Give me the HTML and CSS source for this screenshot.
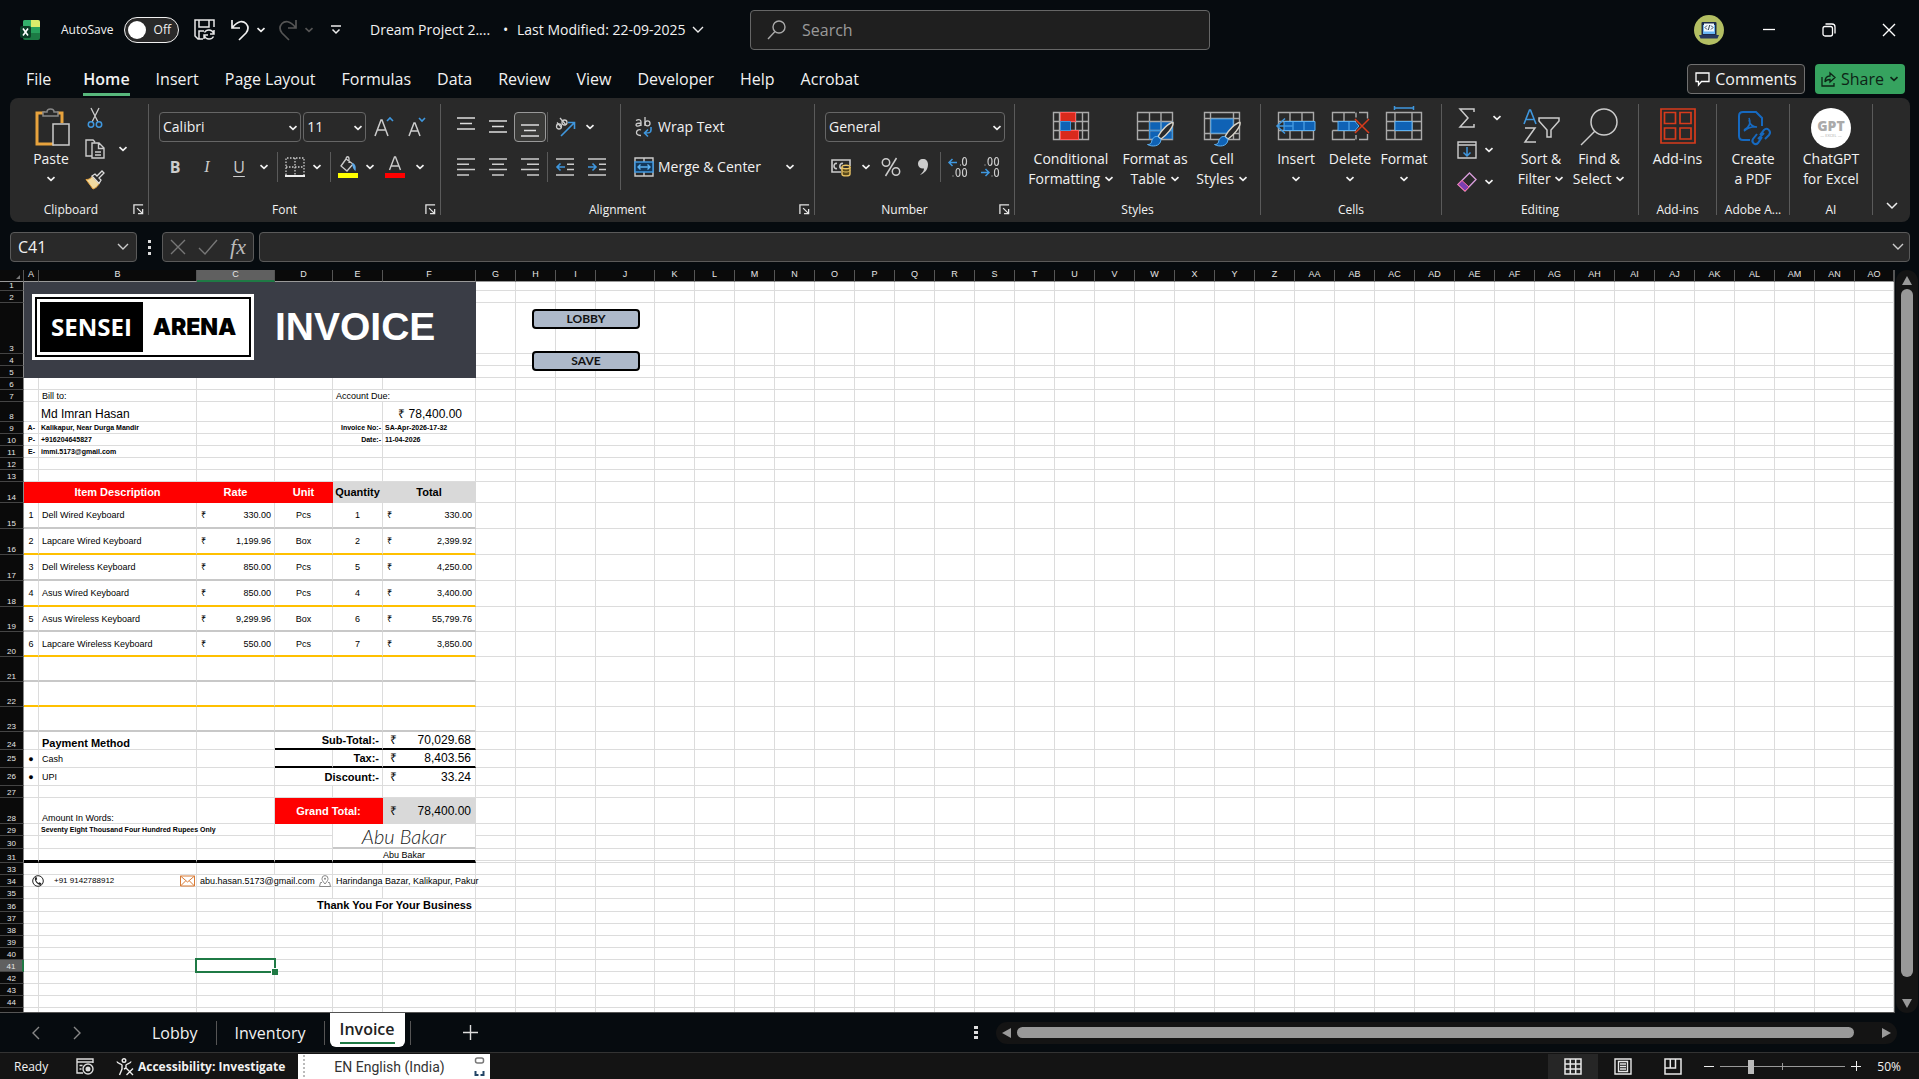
FILE: index.html
```html
<!DOCTYPE html>
<html lang="en">
<head>
<meta charset="utf-8">
<title>Dream Project 2 - Excel</title>
<link rel="stylesheet" href="styles.css">
</head>
<body>
<svg class="defs" aria-hidden="true">
  <symbol id="chev" viewBox="0 0 10 6"><path d="M1.5 1.2 5 4.4 8.500 1.200" fill="none" stroke="currentColor" stroke-width="1.700"/></symbol>
  <symbol id="launch" viewBox="0 0 12 12"><path d="M1 11V1h10M4.500 4.500l5.500 5.500M10.500 5.500v5h-5" fill="none" stroke="#e4e4e4" stroke-width="1.400"/></symbol>
  <symbol id="brush" viewBox="0 0 28 26"><path d="M26.500 1.500c-4 0-12 8-15 14l3 2.500c5-3.500 13-12 12-16.500z" fill="#292929" stroke="#d8d4ca" stroke-width="1.500"/><path d="M11 15.500c-4-.5-5.500 3-6 5.500-.5 2-2 2.500-4 2.500 4 2.500 13 2.500 13.500-5z" fill="#0f62b5" stroke="#5db0f0"/></symbol>
</svg>

<header class="titlebar">
  <div class="title-left">
    <svg class="app-icon" viewBox="0 0 20 20"><rect x="3" width="17" height="20" rx="2" fill="#1c7a44"/><path d="M5 0h7v7H3V2a2 2 0 0 1 2-2z" fill="#33b16b"/><path d="M11 0h7a2 2 0 0 1 2 2v5h-9z" fill="#d9ec6b"/><path d="M11 7h9v6h-9z" fill="#27a05c"/><rect y="6" width="11" height="12" rx="2" fill="#0b3d26"/><path d="M3 8.500l5 7M8 8.500l-5 7" stroke="#fff" stroke-width="1.600"/></svg>
    <label class="autosave" for="autosave">AutoSave</label>
    <span class="switch"><input type="checkbox" id="autosave"><span>Off</span></span>
    <button class="tb save" aria-label="Save"><svg width="22" height="22" viewBox="0 0 22 22" fill="none" stroke="#e8e8e8" stroke-width="1.500"><path d="M9 20H4l-3-3V1h19v7M5 1v7h10V1M5 20v-8h5"/><path d="M20 11v4h-4M10 20v-4h4M19.500 14a5 5 0 0 0-9-.5M10.500 17a5 5 0 0 0 9 .5"/></svg></button>
    <button class="tb undo" aria-label="Undo"><svg width="20" height="22" viewBox="0 0 20 22" fill="none" stroke="#f0f0f0" stroke-width="1.700"><path d="M2 1v8h8M2.500 8.500C8 1.500 13 1.500 16 4.500c3 3.300 2 7 0 9.500l-7 7"/></svg></button>
    <button class="tb caret" aria-label="Undo list"><svg class="chev"><use href="#chev"/></svg></button>
    <button class="tb undo dim" aria-label="Redo"><svg width="20" height="22" viewBox="0 0 20 22" fill="none" stroke="#555" stroke-width="1.700"><path d="M18 1v8h-8M17.500 8.500C12 1.500 7 1.500 4 4.500c-3 3.300-2 7 0 9.500l7 7"/></svg></button>
    <button class="tb caret dim" aria-label="Redo list"><svg class="chev"><use href="#chev"/></svg></button>
    <button class="tb custom" aria-label="Customize toolbar"><svg width="10" height="10" viewBox="0 0 10 10" fill="none" stroke="#eee" stroke-width="1.500"><path d="M0 1h10M1.500 4.500 5 8l3.500-3.500"/></svg></button>
    <span class="doc">Dream Project 2....</span><span class="dot">•</span>
    <button class="modified">Last Modified: 22-09-2025 <svg width="12" height="8" viewBox="0 0 12 8"><path d="M1 1l5 5 5-5" fill="none" stroke="#eee" stroke-width="1.400"/></svg></button>
  </div>
  <div class="search">
    <svg width="20" height="20" viewBox="0 0 20 20" fill="none" stroke="#aaa" stroke-width="1.400"><circle cx="12" cy="7" r="6"/><path d="M8 11.500 1 19"/></svg>
    <input type="text" placeholder="Search" aria-label="Search">
  </div>
  <div class="window">
    <svg class="avatar" viewBox="0 0 30 30"><circle cx="15" cy="15" r="15" fill="#b3bf63"/><rect x="7.500" y="7" width="15" height="14" rx="1" fill="#1d2b4a"/><rect x="9" y="10" width="12" height="9" fill="#69b7f5"/><rect x="10" y="8.500" width="10" height="8" fill="#eef6fb"/><path d="M13 10.500l-2 2 2 2M17 10.500l2 2-2 2M15.700 10l-1.400 5" fill="none" stroke="#345"/><path d="M5 20h20l-1.500 3.500h-17z" fill="#26385e"/></svg>
    <button class="wb" aria-label="Minimize"><svg width="14" height="14" viewBox="0 0 14 14"><path d="M1 6.500h12" stroke="#fff" stroke-width="1.300"/></svg></button>
    <button class="wb" aria-label="Restore"><svg width="14" height="14" viewBox="0 0 14 14" fill="none" stroke="#fff" stroke-width="1.300"><rect x="1" y="3.500" width="9.500" height="9.500" rx="2"/><path d="M3.500 1h6.500a3 3 0 0 1 3 3v6.500"/></svg></button>
    <button class="wb" aria-label="Close"><svg width="14" height="14" viewBox="0 0 14 14"><path d="M1 1l12 12M13 1 1 13" stroke="#fff" stroke-width="1.400"/></svg></button>
  </div>
</header>

<nav class="tabs">
  <button class="file">File</button><button class="on">Home</button><button>Insert</button><button>Page Layout</button><button>Formulas</button><button>Data</button><button>Review</button><button>View</button><button>Developer</button><button>Help</button><button>Acrobat</button>
  <div class="tab-actions">
    <button class="comments"><svg width="15" height="14" viewBox="0 0 15 14"><path d="M1 1h13v8.500H6.500L3.500 13V9.500H1z" fill="none" stroke="#fff" stroke-width="1.300"/></svg>Comments</button>
    <button class="share"><svg width="15" height="15" viewBox="0 0 15 15" fill="none" stroke="#0d2416" stroke-width="1.300"><path d="M1 5v9h12v-3"/><path d="M4 10c0-4 2-6 5-6V1l5 4.500L9 10V7.500c-2.500 0-4 .5-5 2.500z"/></svg>Share<svg class="chev"><use href="#chev"/></svg></button>
  </div>
</nav>

<section class="ribbon">
  <div class="group g-clip">
    <div class="tools">
      <button class="big paste"><svg viewBox="0 0 40 40"><path d="M14 5H6v31h17" fill="none" stroke="#e8a33d" stroke-width="3"/><path d="M26 5h5v10" fill="none" stroke="#e8a33d" stroke-width="3"/><path d="M12 8V4h4c0-4 7-4 7 0h4v4z" fill="#292929" stroke="#888" stroke-width="1.500"/><rect x="22" y="16" width="16" height="21" fill="#292929" stroke="#ccc" stroke-width="1.500"/></svg><span>Paste<br><svg class="chev"><use href="#chev"/></svg></span></button>
      <div class="small-col">
        <div><button aria-label="Cut"><svg width="20" height="20" viewBox="0 0 20 20" fill="none"><path d="M6 0l7 14M14 0 7 14" stroke="#ccc" stroke-width="1.300"/><circle cx="6" cy="16.500" r="2.700" stroke="#3f97de" stroke-width="1.500"/><circle cx="14" cy="16.500" r="2.700" stroke="#3f97de" stroke-width="1.500"/></svg></button></div>
        <div><button aria-label="Copy"><svg width="20" height="20" viewBox="0 0 20 20" fill="none" stroke="#ccc" stroke-width="1.400"><path d="M7 17H1V1h7l2 2M7 4h7l5 5v10H7zM13.500 4v5.500H19M10 13h6M10 16h6"/></svg></button><button class="caret" aria-label="Copy options"><svg class="chev"><use href="#chev"/></svg></button></div>
        <div><button aria-label="Format Painter"><svg width="20" height="20" viewBox="0 0 20 20"><path d="M1 9.500c4 0 5-2 6-3l7 7c-1 2-2 4-6 5.500z" fill="#f0d9a0" stroke="#e8a33d"/><path d="M7 6l3-2 2 2 5-5 2 2-5 5 2 2-2 3.500z" fill="#292929" stroke="#ddd" stroke-width="1.300"/></svg></button></div>
      </div>
    </div>
    <div class="label launch"><span>Clipboard</span><button aria-label="Clipboard settings"><svg><use href="#launch"/></svg></button></div>
  </div>

  <div class="group g-font">
    <div class="tools rows">
      <div class="row">
        <span class="select w-font"><select aria-label="Font"><option>Calibri</option></select><svg class="chev"><use href="#chev"/></svg></span>
        <span class="select w-size"><select aria-label="Font size"><option>11</option></select><svg class="chev"><use href="#chev"/></svg></span>
        <button class="ib" aria-label="Increase font size"><svg width="20" height="22" viewBox="0 0 20 22" fill="none"><path d="M1 20 7 4h1l6 16M3 14h9" stroke="#ccc" stroke-width="1.500"/><path d="M13 5l3-3 3 3" stroke="#3f97de" stroke-width="1.600"/></svg></button>
        <button class="ib" aria-label="Decrease font size"><svg width="20" height="22" viewBox="0 0 20 22" fill="none"><path d="M3 20 8 7h1l5 13M5 15h7" stroke="#ccc" stroke-width="1.500"/><path d="M13 2l3 3 3-3" stroke="#3f97de" stroke-width="1.600"/></svg></button>
      </div>
      <div class="row">
        <button class="ib txt b">B</button><button class="ib txt i">I</button><button class="ib txt u">U</button><button class="caret" aria-label="Underline style"><svg class="chev"><use href="#chev"/></svg></button>
        <i class="vr"></i>
        <button class="ib n" aria-label="Borders"><svg width="20" height="20" viewBox="0 0 20 20" fill="none"><path d="M1 18V1h18v17M10 1v17M1 10h18" stroke="#ccc" stroke-width="1.300" stroke-dasharray="1.500 1.500"/><path d="M0 19h20" stroke="#eee" stroke-width="2"/></svg></button><button class="caret" aria-label="Border style"><svg class="chev"><use href="#chev"/></svg></button>
        <i class="vr"></i>
        <button class="ib n" aria-label="Fill color"><svg width="20" height="22" viewBox="0 0 20 22"><path d="M8 3 3 10l6 5 6-7zM8 3c0-3 3-3 3 0v4" fill="none" stroke="#ccc" stroke-width="1.300"/><path d="M14 7c4 1 4 4 3.500 8-1.500-1-3-3-3.500-8z" fill="#5aa7e6"/><path d="M0 17h20v5H0z" fill="#ff0"/></svg></button><button class="caret" aria-label="Fill colors"><svg class="chev"><use href="#chev"/></svg></button>
        <button class="ib" aria-label="Font color"><svg width="20" height="22" viewBox="0 0 20 22"><path d="M4.500 14 9.500 1h1l5 13M6.500 10h7" fill="none" stroke="#ccc" stroke-width="1.400"/><path d="M0 17h20v5H0z" fill="#f00"/></svg></button><button class="caret" aria-label="Font colors"><svg class="chev"><use href="#chev"/></svg></button>
      </div>
    </div>
    <div class="label launch"><span>Font</span><button aria-label="Font settings"><svg><use href="#launch"/></svg></button></div>
  </div>

  <div class="group g-align">
    <div class="tools">
      <div class="rows split">
        <div class="row">
          <button class="ib" aria-label="Top align"><svg width="18" height="20" viewBox="0 0 18 20" stroke="#ddd" stroke-width="1.500"><path d="M0 1h18M3 6.500h12M0 12h18"/></svg></button>
          <button class="ib" aria-label="Middle align"><svg width="18" height="20" viewBox="0 0 18 20" stroke="#ddd" stroke-width="1.500"><path d="M0 4h18M3 9.500h12M0 15h18"/></svg></button>
          <button class="ib sel" aria-label="Bottom align"><svg width="18" height="20" viewBox="0 0 18 20" stroke="#ddd" stroke-width="1.500"><path d="M0 8h18M3 13.500h12M0 19h18"/></svg></button>
          <i class="vr tight"></i>
          <button class="ib" aria-label="Orientation"><svg width="22" height="20" viewBox="0 0 22 20" fill="none"><g stroke="#ccc" stroke-width="1.300"><circle cx="5" cy="9.500" r="2.500"/><path d="M3 5.500l4.500 5M6 1l6 7"/><circle cx="10.500" cy="5.500" r="2.500"/></g><path d="M7 19 20 6M14 5.500h6.500V12" stroke="#3f97de" stroke-width="1.600"/></svg></button><button class="caret" aria-label="Orientation options"><svg class="chev"><use href="#chev"/></svg></button>
        </div>
        <div class="row">
          <button class="ib" aria-label="Align left"><svg width="18" height="18" viewBox="0 0 18 18" stroke="#ccc" stroke-width="1.500"><path d="M0 1h18M0 6.300h12M0 11.600h18M0 17h12"/></svg></button>
          <button class="ib" aria-label="Center"><svg width="18" height="18" viewBox="0 0 18 18" stroke="#ccc" stroke-width="1.500"><path d="M0 1h18M3 6.300h12M0 11.600h18M3 17h12"/></svg></button>
          <button class="ib" aria-label="Align right"><svg width="18" height="18" viewBox="0 0 18 18" stroke="#ccc" stroke-width="1.500"><path d="M0 1h18M6 6.300h12M0 11.600h18M6 17h12"/></svg></button>
          <i class="vr tight"></i>
          <button class="ib" aria-label="Decrease indent"><svg width="18" height="18" viewBox="0 0 18 18" fill="none"><path d="M0 1h18M11 6.300h7M11 11.600h7M0 17h18" stroke="#ccc" stroke-width="1.500"/><path d="M9 9H1M4.500 5.500 1 9l3.500 3.500" stroke="#3f97de" stroke-width="1.600"/></svg></button>
          <button class="ib" aria-label="Increase indent"><svg width="18" height="18" viewBox="0 0 18 18" fill="none"><path d="M0 1h18M11 6.300h7M11 11.600h7M0 17h18" stroke="#ccc" stroke-width="1.500"/><path d="M0 9h8M4.500 5.500 8 9l-3.500 3.500" stroke="#3f97de" stroke-width="1.600"/></svg></button>
        </div>
      </div>
      <div class="rows wrapcol">
        <div class="row"><button class="wide"><svg width="20" height="20" viewBox="0 0 20 20" fill="none"><g stroke="#ccc" stroke-width="1.300"><path d="M2 3.500c4-2 5 0 5 1.500v4M7 6c-3 0-5 .5-5 2s3.500 1.500 5-.5M11 0v9"/><circle cx="13.500" cy="6.300" r="2.500"/><path d="M7 13c-5-2-7 6 0 5.500"/></g><path d="M17 10v3c0 3-2 3-6 3M14 12.500 10.500 16l3.500 3.500" stroke="#3f97de" stroke-width="1.600"/></svg>Wrap Text</button></div>
        <div class="row"><button class="wide"><svg width="20" height="20" viewBox="0 0 20 20" fill="none"><path d="M1 1h18v18H1zM10 1v4M10 15v4" stroke="#ccc" stroke-width="1.400"/><path d="M1 5h18v10H1z" fill="#14385a" stroke="#3f97de" stroke-width="1.500"/><path d="M4 10h12M6.500 7.500 4 10l2.500 2.500M13.500 7.500 16 10l-2.500 2.500" stroke="#5ab0f0" stroke-width="1.400"/></svg>Merge &amp; Center</button><button class="caret last" aria-label="Merge options"><svg class="chev"><use href="#chev"/></svg></button></div>
      </div>
    </div>
    <div class="label launch"><span>Alignment</span><button aria-label="Alignment settings"><svg><use href="#launch"/></svg></button></div>
  </div>

  <div class="group g-number">
    <div class="tools rows">
      <div class="row"><span class="select w-num"><select aria-label="Number format"><option>General</option></select><svg class="chev"><use href="#chev"/></svg></span></div>
      <div class="row">
        <button class="ib" aria-label="Accounting format"><svg width="20" height="20" viewBox="0 0 20 20" fill="none"><path d="M10 15H1V3h18v6M6 6.500c-4-1-4 6 0 5M12 6.500c-4-1-4 6-1 5" stroke="#ccc" stroke-width="1.600"/><path d="M11 10v7c0 2.500 8 2.500 8 0v-7" fill="#5a4a1a" stroke="#ecc565" stroke-width="1.400"/><ellipse cx="15" cy="10" rx="4" ry="1.800" fill="#292929" stroke="#ecc565" stroke-width="1.400"/><path d="M11 13.500c1 2 7 2 8 0" stroke="#ecc565"/></svg></button><button class="caret" aria-label="Currencies"><svg class="chev"><use href="#chev"/></svg></button>
        <button class="ib" aria-label="Percent"><svg width="20" height="20" viewBox="0 0 20 20" fill="none" stroke="#ccc" stroke-width="1.500"><circle cx="5" cy="5.500" r="3.700"/><circle cx="15" cy="14.500" r="3.700"/><path d="M15.500 1 4.500 19"/></svg></button>
        <button class="ib" aria-label="Comma"><svg width="12" height="18" viewBox="0 0 12 18"><path d="M6 1c3 0 5 2 5 5.500 0 5-3 8.500-8 10.500 3-3 4-4.500 4-6.500-3.500.5-6-1.500-6-4.500S3 1 6 1z" fill="#ccc"/></svg></button>
        <i class="vr tight"></i>
        <button class="ib" aria-label="Increase decimal"><svg width="20" height="20" viewBox="0 0 20 20" fill="none"><path d="M9 5.500H1M4.500 2 1 5.500 4.500 9" stroke="#3f97de" stroke-width="1.500"/><g stroke="#ccc" stroke-width="1.200"><ellipse cx="16.500" cy="4.500" rx="2" ry="4"/><ellipse cx="10" cy="15.500" rx="2" ry="4"/><ellipse cx="16.500" cy="15.500" rx="2" ry="4"/><path d="M12 8h1M4.500 19h1"/></g></svg></button>
        <button class="ib" aria-label="Decrease decimal"><svg width="20" height="20" viewBox="0 0 20 20" fill="none"><path d="M1 15.500h8M5.500 12 9 15.500 5.500 19" stroke="#3f97de" stroke-width="1.500"/><g stroke="#ccc" stroke-width="1.200"><ellipse cx="16.500" cy="15.500" rx="2" ry="4"/><ellipse cx="10" cy="4.500" rx="2" ry="4"/><ellipse cx="16.500" cy="4.500" rx="2" ry="4"/><path d="M4.500 8h1M11.500 19h1"/></g></svg></button>
      </div>
    </div>
    <div class="label launch"><span>Number</span><button aria-label="Number settings"><svg><use href="#launch"/></svg></button></div>
  </div>

  <div class="group g-styles">
    <div class="tools">
      <button class="big w90"><svg viewBox="0 0 40 40"><path d="M2.500 4.500h35v27h-35zM2.500 13.500h35M2.500 22.500h35M8.500 4.500v27M24.500 4.500v27M31.500 4.500v27" fill="none" stroke="#aaa" stroke-width="1.400"/><path d="M9.500 4.500h15v9h-15zM9.500 22.500h18v9h-18z" fill="#d92a1c" stroke="#ff5a5a"/><path d="M9.500 13.500h10v9h-10z" fill="#0f62b5" stroke="#3f97de"/></svg><span>Conditional<br>Formatting <svg class="chev"><use href="#chev"/></svg></span></button>
      <button class="big w78"><svg viewBox="0 0 40 40"><path d="M14 13h24v19H14z" fill="#0f62b5"/><path d="M2.500 4.500h35v27h-35zM2.500 13.500h35M2.500 22.500h35M14.500 4.500v27M26 4.500v27" fill="none" stroke="#aaa" stroke-width="1.400"/><path d="M14.500 22.500h23M14.500 13.500v18M26 13.500v18M37.500 13.500v18" stroke="#3f97de"/><use href="#brush" x="11" y="13" width="29" height="26"/></svg><span>Format as<br>Table <svg class="chev"><use href="#chev"/></svg></span></button>
      <button class="big w56"><svg viewBox="0 0 40 40"><path d="M2.500 4.500h35v27h-35zM2.500 10.500h35M2.500 25.500h35M8.500 4.500v27M31.500 4.500v27" fill="none" stroke="#aaa" stroke-width="1.400"/><path d="M9 11h22v14H9z" fill="#0f62b5" stroke="#3f97de"/><use href="#brush" x="11" y="13" width="29" height="26"/></svg><span>Cell<br>Styles <svg class="chev"><use href="#chev"/></svg></span></button>
    </div>
    <div class="label"><span>Styles</span></div>
  </div>

  <div class="group g-cells">
    <div class="tools">
      <button class="big w54"><svg viewBox="0 0 40 40"><path d="M2.500 4.500h35v27h-35zM14 4.500v27M26 4.500v27M2.500 13.500h35M2.500 22.500h35" fill="none" stroke="#aaa" stroke-width="1.400"/><path d="M8 13.500h31v9H8z" fill="#0f62b5" stroke="#5db0f0"/><path d="M17 13.500v9M28 13.500v9" stroke="#5db0f0"/><path d="M17 18H1M9 10.500 1 18l8 7.500" fill="none" stroke="#3f97de" stroke-width="1.500"/></svg><span>Insert<br><svg class="chev"><use href="#chev"/></svg></span></button>
      <button class="big w54"><svg viewBox="0 0 40 40"><path d="M25 4.500H2.500v9M2.500 22.500v9H25M29 4.500h8.500v6M37.500 26v5.500H29M14 4.500v27M26 4.500v5M26 27v4.500M2.500 13.500H26M2.500 22.500H26" fill="none" stroke="#aaa" stroke-width="1.400"/><path d="M8 13.500h17l4 4.500-4 4.500H8z" fill="#0f62b5" stroke="#5db0f0"/><path d="M19 13.500v9" stroke="#5db0f0"/><path d="M25 11l14 14M39 11 25 25" stroke="#d83b1c" stroke-width="1.500"/></svg><span>Delete<br><svg class="chev"><use href="#chev"/></svg></span></button>
      <button class="big w54"><svg viewBox="0 0 40 40"><path d="M2.500 4.500h35v27h-35zM11 4.500v27M28 4.500v27M2.500 13.500h35M2.500 22.500h35" fill="none" stroke="#aaa" stroke-width="1.400"/><path d="M11 13.500h17v9H11z" fill="#0f62b5" stroke="#5db0f0"/><path d="M10.500 0h19M10.500-2v4M29.500-2v4" stroke="#3f97de" stroke-width="1.500"/></svg><span>Format<br><svg class="chev"><use href="#chev"/></svg></span></button>
    </div>
    <div class="label"><span>Cells</span></div>
  </div>

  <div class="group g-edit">
    <div class="tools">
      <div class="small-col">
        <div><button aria-label="AutoSum"><svg width="20" height="20" viewBox="0 0 20 20"><path d="M17 4V1H3l8 9-8 9h14v-3" fill="none" stroke="#ccc" stroke-width="1.500"/></svg></button><button class="caret" aria-label="Sum options"><svg class="chev"><use href="#chev"/></svg></button></div>
        <div><button aria-label="Fill"><svg width="20" height="20" viewBox="0 0 20 20" fill="none"><path d="M1 2h18v16H1zM1 5h18" stroke="#ccc" stroke-width="1.400"/><path d="M10 7v9M6.500 12.500 10 16l3.500-3.500" stroke="#3f97de" stroke-width="1.500"/></svg></button><button class="caret" aria-label="Fill options"><svg class="chev"><use href="#chev"/></svg></button></div>
        <div><button aria-label="Clear"><svg width="20" height="20" viewBox="0 0 20 20"><path d="M12.500 1 19 7.500 8 19 1 12.500z" fill="none" stroke="#d69bd9" stroke-width="1.400"/><path d="M5 8.500 12 15l-4 4-7-6.500z" fill="#7a3fb0" stroke="#ff6fa0"/></svg></button><button class="caret" aria-label="Clear options"><svg class="chev"><use href="#chev"/></svg></button></div>
      </div>
      <button class="big w62"><svg viewBox="0 0 40 40" fill="none"><path d="M3 16 8.500 2h1L15 16M5 11.500h8" stroke="#3f97de" stroke-width="1.600"/><path d="M4 20h10L4 34h11" stroke="#ccc" stroke-width="1.500"/><path d="M18 10h20v3l-8 9v7h-4v-7l-8-9z" stroke="#ccc" stroke-width="1.500"/></svg><span>Sort &amp;<br>Filter <svg class="chev"><use href="#chev"/></svg></span></button>
      <button class="big w54"><svg viewBox="0 0 40 40" fill="none" stroke="#ccc" stroke-width="1.500"><circle cx="25" cy="14" r="13"/><path d="M16 23 2 37"/></svg><span>Find &amp;<br>Select <svg class="chev"><use href="#chev"/></svg></span></button>
    </div>
    <div class="label"><span>Editing</span></div>
  </div>

  <div class="group g-addins">
    <div class="tools"><button class="big"><svg viewBox="0 0 40 40" fill="none" stroke="#d83b1c"><path d="M3 1h34v34H3z" stroke-width="1.700"/><path d="M6.500 4.500h11v11h-11zM22 4.500h11v11H22zM6.500 20h11v11h-11zM22 20h11v11H22z" stroke-width="1.700"/></svg><span>Add-ins</span></button></div>
    <div class="label"><span>Add-ins</span></div>
  </div>
  <div class="group g-adobe">
    <div class="tools"><button class="big"><svg viewBox="0 0 40 40" fill="none" stroke="#1669c0" stroke-width="2"><path d="M17 32H10c-3 0-4-1-4-4V8c0-3 1-4 4-4h13l6 6v8"/><path d="M11 22c6-3 7-8 5-12M16 12c1 5 4 7 8 7-5-1-9 1-13 4" stroke-width="1.600"/><path d="M27 27l4-5c3-3 8 1 5 5l-4 4M29 29l-4 6c-3 3-7-1-5-4l4-5M25 31l6-6"/></svg><span>Create<br>a PDF</span></button></div>
    <div class="label"><span>Adobe A...</span></div>
  </div>
  <div class="group g-ai">
    <div class="tools"><button class="big"><span class="gpt"><b>GPT</b><small>— EXCEL —</small></span><span>ChatGPT<br>for Excel</span></button></div>
    <div class="label"><span>AI</span></div>
  </div>
  <button class="collapse" aria-label="Collapse ribbon"><svg width="12" height="8" viewBox="0 0 12 8"><path d="M1 1l5 5 5-5" fill="none" stroke="#eee" stroke-width="1.500"/></svg></button>
</section>

<section class="formula">
  <div class="namebox"><input type="text" value="C41" aria-label="Name box"><svg width="12" height="8" viewBox="0 0 12 8"><path d="M1 1l5 5 5-5" fill="none" stroke="#ccc" stroke-width="1.400"/></svg></div>
  <i class="grip"></i>
  <div class="fx">
    <button aria-label="Cancel"><svg width="16" height="16" viewBox="0 0 16 16"><path d="M1 1l14 14M15 1 1 15" stroke="#777" stroke-width="1.400"/></svg></button>
    <button aria-label="Enter"><svg width="20" height="16" viewBox="0 0 20 16"><path d="M1 9l6 6L19 1" fill="none" stroke="#777" stroke-width="1.400"/></svg></button>
    <button class="fn" aria-label="Insert function">fx</button>
  </div>
  <div class="fbar"><input type="text" aria-label="Formula"><svg width="12" height="8" viewBox="0 0 12 8"><path d="M1 1l5 5 5-5" fill="none" stroke="#ccc" stroke-width="1.400"/></svg></div>
</section>

<main class="work">
  <div class="sheet">
    <table id="grid"></table>
    <button class="macro lobby">LOBBY</button>
    <button class="macro savebtn">SAVE</button>
    <svg class="pic phone" viewBox="0 0 12 12"><circle cx="6" cy="6" r="5.300" fill="#fff" stroke="#222"/><path d="M3 2.500c-1 3 2 7 5.500 7.500l1-1.500-2-1.200-1 .7C5 7 4.300 6 4.200 5l1-.7L4.500 2z" fill="#222"/></svg>
    <svg class="pic mail" viewBox="0 0 15 11"><path d="M.5.500h14v10H.5zM.5.500l7 6 7-6M.5 10.500l5-5M14.500 10.500l-5-5" fill="none" stroke="#d87a35"/></svg>
    <svg class="pic pin" viewBox="0 0 12 12"><path d="M6 9C3.500 6 3 5 3 3.600a3 3 0 0 1 6 0C9 5 8.500 6 6 9zM3 7.500H1.500L.5 11.500h11l-1-4H9" fill="none" stroke="#888"/><circle cx="6" cy="3.700" r="1" fill="#888"/></svg>
  </div>
  <div class="vscroll"><i class="up"></i><i class="thumb"></i><i class="down"></i></div>
</main>

<footer>
  <div class="sheets">
    <button class="nav" aria-label="Previous sheet"><svg width="8" height="14" viewBox="0 0 8 14"><path d="M7 1 1 7l6 6" fill="none" stroke="#888" stroke-width="1.400"/></svg></button>
    <button class="nav" aria-label="Next sheet"><svg width="8" height="14" viewBox="0 0 8 14"><path d="M1 1l6 6-6 6" fill="none" stroke="#888" stroke-width="1.400"/></svg></button>
    <button class="st first">Lobby</button><i></i><button class="st">Inventory</button><i></i><button class="st cur"><span>Invoice</span></button><i></i>
    <button class="add" aria-label="New sheet"><svg width="15" height="15" viewBox="0 0 15 15"><path d="M7.500 0v15M0 7.500h15" stroke="#ddd" stroke-width="1.400"/></svg></button>
    <div class="hzone"><i class="grip"></i><div class="hscroll"><i class="lt"></i><i class="thumb"></i><i class="rt"></i></div></div>
  </div>
  <div class="status">
    <span class="ready">Ready</span>
    <button class="rec" aria-label="Record macro"><svg width="18" height="17" viewBox="0 0 18 17" fill="none" stroke="#ddd" stroke-width="1.400"><path d="M7 15H1V1h16v4M1 4h16M3.500 7.500h3M3.500 11h2"/><circle cx="12" cy="11" r="5"/><circle cx="12" cy="11" r="1.800" fill="#ddd"/></svg></button>
    <button class="acc"><svg width="18" height="18" viewBox="0 0 18 18" fill="none" stroke="#eee" stroke-width="1.400"><circle cx="8" cy="2.500" r="1.800"/><path d="M1 3.500c0 2 5 2.500 5 3.500v4L3.500 17M15 3.500c0 2-5 2.500-5 3.500v3l-2 1M10.500 10.500l6.500 6.500M17 10.500 10.500 17"/></svg>Accessibility: Investigate</button>
    <div class="lang"><i class="dots"></i><span>EN English (India)</span><svg width="12" height="20" viewBox="0 0 12 20" fill="none"><rect x="1.500" y="1" width="8" height="5" rx="2" stroke="#777" stroke-width="1.500"/><path d="M1.500 14v4h3M9.500 14v4h-3" stroke="#246" stroke-width="2"/></svg></div>
    <div class="views">
      <button class="on" aria-label="Normal view"><svg width="18" height="17" viewBox="0 0 18 17"><path d="M1 1h16v15H1zM6.300 1v15M11.700 1v15M1 6h16M1 11h16" fill="none" stroke="#e8e8e8" stroke-width="1.500"/></svg></button>
      <button aria-label="Page layout view"><svg width="18" height="17" viewBox="0 0 18 17"><path d="M1 1h16v15H1zM4.500 3.500h9v10h-9zM6 6h6M6 8.500h6M6 11h6" fill="none" stroke="#e8e8e8" stroke-width="1.400"/></svg></button>
      <button aria-label="Page break view"><svg width="18" height="17" viewBox="0 0 18 17"><path d="M1 1h16v15H1zM1 10h10.500V1M6.300 1v9" fill="none" stroke="#e8e8e8" stroke-width="1.500"/></svg></button>
      <button class="zb" aria-label="Zoom out"><svg width="11" height="11" viewBox="0 0 11 11"><path d="M0 5.500h10" stroke="#eee"/></svg></button>
      <input type="range" min="0" max="100" value="23" aria-label="Zoom">
      <button class="zb" aria-label="Zoom in"><svg width="11" height="11" viewBox="0 0 11 11"><path d="M0 5.500h10M5.500 0v10" stroke="#eee"/></svg></button>
      <span class="pct">50%</span>
    </div>
  </div>
</footer>
<script src="sheet.js"></script>
</body>
</html>
```
FILE: styles.css
```css
* { box-sizing: border-box; }
body {
  margin: 0; height: 100vh; overflow: hidden;
  display: flex; flex-direction: column;
  background: #060b0f; color: #f2f2f2;
  font: 14px/20px "Open Sans", "Noto Sans", sans-serif;
}
button { font: inherit; color: inherit; background: none; border: 0; padding: 0; white-space: nowrap; }
input, select { font: inherit; color: inherit; background: none; border: 0; outline: 0; padding: 0; }
svg { display: block; flex: none; overflow: visible; }
.defs { position: absolute; width: 0; height: 0; }
.chev { width: 10px; height: 6px; }

/* title bar */
.titlebar { display: grid; grid-template-columns: 750px minmax(200px, 460px) 1fr; height: 60px; flex: none; align-items: center; }
.title-left { display: flex; align-items: center; padding-left: 20px; }
.app-icon { width: 20px; height: 20px; margin-right: 21px; }
.autosave { font-size: 12px; width: 63px; }
.switch { position: relative; width: 55px; height: 26px; margin-right: 15px; }
.switch input { appearance: none; margin: 0; width: 55px; height: 26px; border: 1px solid #f0f0f0; border-radius: 13px; background: #292929; display: block; }
.switch input::before { content: ""; display: block; width: 18px; height: 18px; border-radius: 50%; background: #fff; margin: 3px; }
.switch span { position: absolute; right: 8px; top: 3px; font-size: 12px; pointer-events: none; }
.tb { display: flex; justify-content: center; align-items: center; height: 28px; }
.tb.save { width: 22px; margin-right: 12px; }
.tb.undo { width: 24px; }
.tb.caret { width: 18px; margin-right: 6px; }
.tb.custom { width: 24px; margin-right: 22px; }
.dim { color: #555; }
.doc { width: 133px; }
.dot { width: 14px; }
.modified { display: flex; align-items: center; gap: 6px; }
.search { display: flex; align-items: center; gap: 15px; height: 40px; margin-bottom: 1px; padding: 0 16px; border: 1px solid #666; border-radius: 4px; background: #1f1f1f; }
.search input { flex: 1; font-size: 16px; min-width: 0; }
.search input::placeholder { color: #9a9a9a; opacity: 1; }
.window { display: flex; justify-content: flex-end; align-items: center; }
.avatar { width: 30px; height: 30px; margin-right: 15px; }
.wb { width: 60px; height: 40px; display: grid; place-items: center; }

/* ribbon tabs */
.tabs { display: flex; align-items: center; gap: 26px; height: 38px; padding: 0 14px 0 26px; flex: none; font-size: 16px; }
.tabs > button { height: 34px; padding-top: 3px; border-bottom: 3px solid transparent; }
.tabs > .file { margin-right: 6px; }
.tabs > .on { font-weight: 600; border-color: #57b77b; }
.tab-actions { margin-left: auto; display: flex; gap: 10px; }
.comments, .share { display: flex; align-items: center; justify-content: center; gap: 5px; height: 30px; border-radius: 4px; }
.comments { width: 118px; border: 1px solid #707070; background: #222; }
.share { width: 90px; background: #36a35f; color: #0d2416; }

/* ribbon */
.ribbon { display: flex; height: 124px; flex: none; margin: 0 9px 0 10px; padding: 6px 0 7px; background: #292929; border-radius: 8px; }
.group { display: flex; flex-direction: column; justify-content: space-between; border-right: 1px solid #5a5a5a; flex: none; }
.g-clip { width: 139px; }
.g-font { width: 292px; }
.g-align { width: 374px; }
.g-number { width: 200px; }
.g-styles { width: 246px; }
.g-cells { width: 181px; }
.g-edit { width: 197px; }
.g-addins { width: 78px; }
.g-adobe { width: 73px; }
.g-ai { width: 83px; }
.tools { display: flex; padding: 4px 8px 0; }
.rows { display: flex; flex-direction: column; gap: 10px; padding-top: 8px; }
.g-align .tools { padding: 0; }
.g-font .tools { padding-left: 10px; }
.g-number .tools { padding-left: 10px; padding-right: 0; }
.row { display: flex; align-items: center; height: 30px; }
.label { display: flex; position: relative; top: 1px; justify-content: center; font-size: 12px; line-height: 12px; }
.label.launch { padding-right: 20px; }
.g-clip .launch { padding-right: 16px; }
.label button { position: absolute; right: 4px; top: 0; }
.label svg { width: 11px; height: 11px; }
.ib { width: 32px; height: 30px; display: grid; place-items: center; flex: none; }
.ib.n { width: 26px; }
.sel { border: 1px solid #999; border-radius: 4px; background: #3a3a38; }
.txt { font-size: 16px; color: #ccc; }
.b { font-weight: 700; }
.i { font-family: "Liberation Serif", serif; font-style: italic; }
.u { text-decoration: underline; text-underline-offset: 3px; }
.caret { width: 18px; height: 24px; display: grid; place-items: center; flex: none; }
.vr { width: 1px; height: 30px; background: #5a5a5a; margin: 0 4px; flex: none; }
.vr.tight { margin: 0 1px; }
.select { position: relative; height: 30px; margin-right: 2px; }
.select select { appearance: none; width: 100%; height: 30px; border: 1px solid #666; border-radius: 4px; padding: 0 3px; }
.select .chev { position: absolute; right: 3px; top: 13px; pointer-events: none; }
.w-font { width: 143px; }
.w-size { width: 63px; }
.w-num { width: 180px; }
.split { width: 179px; padding-left: 9px; flex: none; }
.wrapcol { flex: 1; padding-left: 13px; border-left: 1px solid #5a5a5a; padding-bottom: 8px; }
.wide { display: flex; align-items: center; gap: 4px; }
.last { margin-left: auto; margin-right: 15px; }
.big { display: flex; flex-direction: column; align-items: center; flex: 1; line-height: 20px; }
.big > svg { width: 40px; height: 40px; margin-bottom: 1px; }
.big .chev { display: inline-block; vertical-align: 2px; }
.paste { max-width: 68px; }
.g-clip .tools { padding-left: 7px; }
.g-adobe .tools, .g-ai .tools, .g-addins .tools { padding: 4px 0 0; }
.g-styles .tools { padding-left: 11px; padding-right: 9px; }
.w90 { flex: 0 0 90px; }
.w78 { flex: 0 0 78px; }
.w62 { flex: 0 0 62px; }
.w56 { flex: 0 0 56px; }
.w54 { flex: 0 0 54px; }
.small-col { display: flex; flex-direction: column; gap: 11px; width: 54px; }
.small-col div { display: flex; height: 20px; align-items: center; gap: 9px; }
.g-edit .small-col { gap: 12px; width: 60px; padding-left: 7px; }
.g-edit .small-col .caret { margin-left: -6px; }
.g-edit .small-col div:first-child .caret { margin-left: 2px; }
.gpt { width: 40px; height: 40px; margin-bottom: 1px; border-radius: 50%; background: #fff; color: #aaa; display: flex; flex-direction: column; align-items: center; justify-content: center; }
.gpt b { font-size: 14px; line-height: 14px; font-weight: 800; }
.gpt small { font-size: 4px; line-height: 5px; }
.collapse { margin: auto 12px 5px auto; }

/* formula bar */
.formula { display: flex; height: 48px; flex: none; padding: 10px 9px 8px 10px; }
.namebox, .fx, .fbar { display: flex; align-items: center; height: 30px; border: 1px solid #5a5a5a; border-radius: 4px; background: #292929; }
.namebox { width: 127px; padding: 0 7px; font-size: 16px; }
.namebox input, .fbar input { flex: 1; min-width: 0; }
.grip { width: 3px; height: 15px; margin: 8px 11px 0 11px; background: repeating-linear-gradient(#ddd 0 3px, transparent 3px 6px); }
.fx { width: 92px; justify-content: space-between; padding: 0 7px; margin-right: 5px; }
.fn { font: italic 22px/22px "Liberation Serif", serif; color: #bbb; }
.fbar { flex: 1; padding: 0 5px; }

/* worksheet */
.work { flex: 1; min-height: 0; display: flex; }
.sheet { flex: 1; position: relative; overflow: hidden; background: #fff; color: #000; border-bottom: 1px solid #555; border-right: 1px solid #555; font: 9px/10px "Liberation Sans", Arial, sans-serif; }
table { table-layout: fixed; width: 100%; border-spacing: 0; }
th, td { padding: 0 3px; border-right: 1px solid #dcdcdc; border-bottom: 1px solid #dcdcdc; white-space: nowrap; position: relative; }
th { background: #0a0a0a; color: #e6e6e6; font-weight: 400; padding: 0; line-height: 8px; }
thead th { border-right-color: #555; border-bottom-color: #999; line-height: 9px; vertical-align: top; }
tbody th { border-right-color: #888; border-bottom-color: #444; vertical-align: bottom; font-size: 8px; }
tbody th.mid { vertical-align: middle; }
thead .hot { background: #606060; border-bottom: 2px solid #1f7a45; }
tbody .hot { background: #606060; border-right: 2px solid #1f7a45; }
.corner::after { content: ""; position: absolute; right: 3px; bottom: 2px; border: 2px solid transparent; border-right-color: #777; border-bottom-color: #777; }
.c { text-align: center; }
.r { text-align: right; }
.bot { vertical-align: bottom; }
.bold { font-weight: 700; }
.s7 { font-size: 7px; font-weight: 700; line-height: 8px; }
.s8 { font-size: 8px; padding-left: 15px; }
.s11 { font-size: 11px; line-height: 12px; }
.s12 { font-size: 12px; line-height: 14px; padding: 0 4px 0 6px; }
.name { padding-left: 2px; }
.due { padding-right: 13px; }
.red { background: #f00; color: #fff; border-color: #f00; }
.grey { background: #d9d9d9; border-color: #d9d9d9; }
.fit { padding: 0 1px; }
.gl { border-bottom: 2px solid #c8c8c8; }
.yl { border-bottom: 2px solid #ffc000; }
.bl { border-bottom: 2px solid #000; }
.end { border-bottom: 3px solid #000; }
.dbl { border-bottom: 3px double #dcdcdc; }
.money div { display: flex; justify-content: space-between; padding: 0 0 0 1px; }
.sign { font: italic 300 20px/20px Lato, sans-serif; color: #222; }
.banner { background: #3a3d46; padding: 0 0 0 8px; border-color: #3a3d46; color: #fff; }
.banner-in { display: flex; align-items: center; gap: 21px; height: 66px; margin-bottom: 6px; font: bold 39px/68px "Liberation Sans", Arial, sans-serif; }
.logo { width: 222px; height: 66px; padding: 3px; background: #fff; flex: none; }
.logo div { display: flex; height: 60px; border: 2px solid #000; padding: 3px; align-items: stretch; }
.logo b { flex: 1; display: grid; place-items: center; }
.logo .l { background: #000; color: #fff; flex: 0 0 103px; font: bold 24px/24px "Open Sans", sans-serif; }
.logo .rr { color: #000; font: 900 23px/24px Inter, sans-serif; }
.pick::before { content: ""; position: absolute; z-index: 1; inset: -2px; border: 2px solid #1f7a45; }
.pick::after { content: ""; position: absolute; z-index: 2; right: -4px; bottom: -4px; width: 6px; height: 6px; background: #1f7a45; border: solid #fff; border-width: 1px 0 0 1px; }
.macro { position: absolute; left: 532px; width: 108px; height: 20px; border: 2px solid #000; border-radius: 4px; background: #adb9ca; font: 700 12px/16px Lato, sans-serif; color: #111; }
.lobby { top: 39px; }
.savebtn { top: 81px; }
.pic { position: absolute; top: 605px; height: 12px; }
.phone { left: 32px; width: 12px; }
.mail { left: 180px; width: 15px; }
.pin { left: 319px; width: 12px; }

/* scroll bars */
.vscroll { width: 22px; margin: 0 1px; display: flex; flex-direction: column; align-items: center; background: #141414; border-radius: 11px; padding: 6px 0 5px; gap: 4px; }
.thumb { background: #999; border-radius: 6px; flex: 1; }
.vscroll .thumb { width: 12px; margin-bottom: 18px; }
.up, .down { border: 5px solid transparent; }
.up { border-bottom: 9px solid #999; border-top: 0; }
.down { border-top: 9px solid #999; border-bottom: 0; }

/* sheet tabs */
.sheets { display: flex; height: 39px; align-items: center; font-size: 16px; }
.nav { width: 41px; display: grid; place-items: center; }
.nav:first-child { margin-left: 15px; }
.sheets > i { width: 1px; height: 24px; background: #555; }
.st { padding: 0 18px; }
.first { margin-left: 37px; }
.cur { background: #fff; color: #222; height: 34px; align-self: flex-start; border-radius: 0 0 6px 6px; padding: 0 10px; margin: 0 5px; font-weight: 600; }
.cur span { display: block; border-bottom: 2px solid #1f7a45; line-height: 25px; }
.add { margin-left: 52px; }
.hzone { flex: 0 1 923px; margin-left: auto; margin-right: 22px; display: flex; align-items: center; }
.hzone .grip { height: 13px; width: 4px; margin: 0 18px 0 0; background: repeating-linear-gradient(#ddd 0 3px, transparent 3px 5px); }
.hscroll { flex: 1; height: 22px; display: flex; align-items: center; background: #141414; border-radius: 11px; padding: 0 6px; gap: 6px; }
.hscroll .thumb { height: 11px; margin-right: 22px; }
.lt, .rt { border: 5px solid transparent; }
.lt { border-right: 9px solid #999; border-left: 0; }
.rt { border-left: 9px solid #999; border-right: 0; }

/* status bar */
.status { display: flex; height: 27px; align-items: center; padding-top: 1px; background: #141414; border-top: 1px solid #333; font-size: 12px; }
.ready { width: 62px; padding-left: 14px; }
.rec { margin: 0 22px 0 14px; }
.acc { display: flex; align-items: center; gap: 4px; font-weight: 700; width: 182px; }
.lang { width: 192px; align-self: stretch; background: #fff; color: #333; display: flex; align-items: center; justify-content: space-between; padding: 0 4px 0 5px; font: 14px/20px Roboto, sans-serif; }
.dots { width: 2px; height: 24px; background: repeating-linear-gradient(#bbb 0 2px, transparent 2px 4px); }
.views { margin-left: auto; display: flex; align-self: stretch; align-items: center; padding-right: 18px; }
.views button { width: 50px; align-self: stretch; display: grid; place-items: center; }
.views .on { background: #262626; }
.views .zb { width: 22px; }
input[type="range"] { appearance: none; width: 125px; height: 14px; margin: 0; background: linear-gradient(#999, #999) 50% 50% / 1px 7px no-repeat, linear-gradient(#999, #999) 0 50% / 100% 1px no-repeat; }
input[type="range"]::-webkit-slider-thumb { appearance: none; width: 6px; height: 14px; background: #bbb; }
.pct { margin-left: 10px; }
```
FILE: sheet.js
```js
// Column widths A..AO; the last column takes whatever is left over.
const widths = [15, 158, 78, 58, 50, 93, 40, 40, 40, 59];
const COLS = 41;
const heights = { 1: 9, 3: 51, 8: 20, 14: 21, 15: 26, 16: 26, 17: 26, 18: 26, 19: 25, 20: 25, 21: 25, 22: 25, 23: 25,
  24: 18, 25: 18, 26: 18, 28: 26, 30: 13, 31: 14 };
const colName = i => (i < 26 ? '' : 'A') + String.fromCharCode(65 + i % 26);
const money = v => `<div><span>₹</span><span>${v}</span></div>`;

// address: [html, classes, colspan, rowspan]
const cells = {
  A1: ['<div class="banner-in"><div class="logo"><div><b class="l">SENSEI</b><b class="rr">ARENA</b></div></div>INVOICE</div>', 'banner', 6, 5],
  B7: ['Bill to:', ''], E7: ['Account Due:', '', 2],
  B8: ['Md Imran Hasan', 's12 bot name'], F8: ['₹ 78,400.00', 's12 bot r due'],
  A9: ['A-', 's7 r'], B9: ['Kalikapur, Near Durga Mandir', 's7 name'],
  A10: ['P-', 's7 r'], B10: ['+916204645827', 's7 name'],
  A11: ['E-', 's7 r'], B11: ['immi.5173@gmail.com', 's7 name'],
  E9: ['Invoice No:-', 's7 r fit'], F9: ['SA-Apr-2026-17-32', 's7 name'],
  E10: ['Date:-', 's7 r fit'], F10: ['11-04-2026', 's7 name'],
  A14: ['', 'red'], B14: ['Item Description', 'red c bold s11'], C14: ['Rate', 'red c bold s11'], D14: ['Unit', 'red c bold s11'],
  E14: ['Quantity', 'grey c bold s11 fit'], F14: ['Total', 'grey c bold s11'],
  B24: ['Payment Method', 'bold s11 bot'], D24: ['Sub-Total:-', 'bold s11 r bl', 2], F24: [money('70,029.68'), 's12 money bl'],
  A25: ['●', 'c'], B25: ['Cash', ''], D25: ['', 'bl'], E25: ['Tax:-', 'bold s11 r bl'], F25: [money('8,403.56'), 's12 money bl'],
  A26: ['●', 'c'], B26: ['UPI', ''], D26: ['Discount:-', 'bold s11 r', 2], F26: [money('33.24'), 's12 money'],
  B28: ['Amount In Words:', 'bot'], D28: ['Grand Total:', 'red c bold s11', 2], F28: [money('78,400.00'), 's12 money grey'],
  B29: ['Seventy Eight Thousand Four Hundred Rupees Only', 's7 name', 2],
  E29: ['Abu Bakar', 'sign c gl', 2, 2], E31: ['Abu Bakar', 'c end', 2],
  B34: ['+91 9142788912', 's8'], C34: ['abu.hasan.5173@gmail.com', '', 2], E34: ['Harindanga Bazar, Kalikapur, Pakur', '', 2],
  D36: ['Thank You For Your Business', 'bold s11 r', 3],
  C41: ['', 'pick'],
};
[['Dell Wired Keyboard', '330.00', 'Pcs', 1, '330.00'],
 ['Lapcare Wired Keyboard', '1,199.96', 'Box', 2, '2,399.92'],
 ['Dell Wireless Keyboard', '850.00', 'Pcs', 5, '4,250.00'],
 ['Asus Wired Keyboard', '850.00', 'Pcs', 4, '3,400.00'],
 ['Asus Wireless Keyboard', '9,299.96', 'Box', 6, '55,799.76'],
 ['Lapcare Wireless Keyboard', '550.00', 'Pcs', 7, '3,850.00']].forEach(([item, rate, unit, qty, total], i) => {
  const n = 15 + i;
  cells['A' + n] = [i + 1, 'c'];
  cells['B' + n] = [item, ''];
  cells['C' + n] = [money(rate), 'money'];
  cells['D' + n] = [unit, 'c'];
  cells['E' + n] = [qty, 'c'];
  cells['F' + n] = [money(total), 'money'];
});

let html = '<colgroup><col style="width:24px">';
for (let c = 0; c < COLS; c++) html += c === COLS - 1 ? '<col>' : `<col style="width:${widths[c] || 40}px">`;
html += '</colgroup><thead><tr style="height:12px"><th class="corner"></th>';
for (let c = 0; c < COLS; c++) html += `<th scope="col"${c === 2 ? ' class="hot"' : ''}>${colName(c)}</th>`;
html += '</tr></thead><tbody>';

const rowClass = { 25: 'mid', 26: 'mid', 41: 'hot' };
const covered = new Set();
for (let r = 1; r <= 45; r++) {
  if (r === 32) continue; // hidden row
  html += `<tr style="height:${heights[r] || 12}px"><th scope="row" class="${rowClass[r] || ''}">${r}</th>`;
  for (let c = 0; c < COLS; c++) {
    if (covered.has(r + ':' + c)) continue;
    const [text, cls, cs = 1, rs = 1] = cells[colName(c) + r] || ['', ''];
    for (let y = 0; y < rs; y++) for (let x = 0; x < cs; x++) covered.add((r + y) + ':' + (c + x));
    let k = cls;
    if (c < 6 && r >= 15 && r <= 23) k += r % 2 ? ' gl' : ' yl';
    if (r === 31) k += c < 6 ? ' end' : ' dbl';
    html += `<td class="${k.trim()}"${cs > 1 ? ` colspan="${cs}"` : ''}${rs > 1 ? ` rowspan="${rs}"` : ''}>${text}</td>`;
  }
  html += '</tr>';
}
document.getElementById('grid').innerHTML = html + '</tbody>';
```
